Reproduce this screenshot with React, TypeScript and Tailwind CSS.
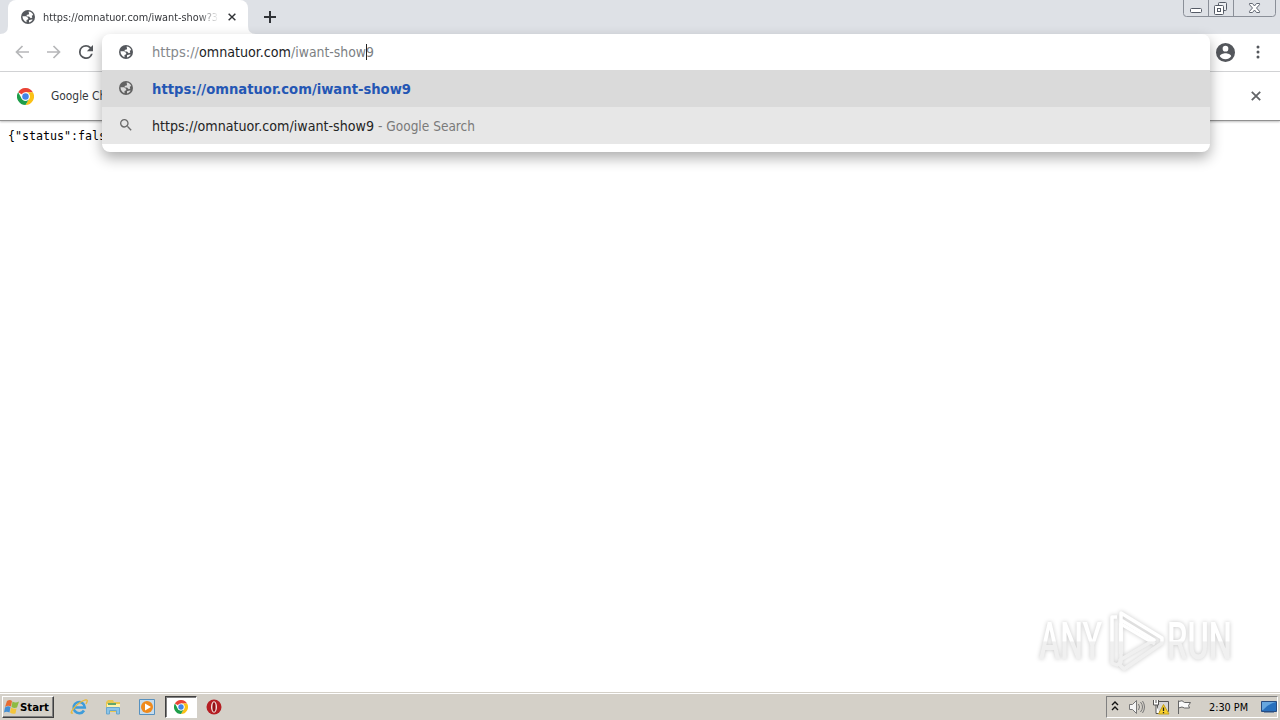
import type { ReactNode } from 'react';

const UI_FONT = "font-['DejaVu_Sans_Condensed','Noto_Sans',sans-serif]";

function GlobeIcon({ className, land }: { className: string; land: string }) {
  return (
    <svg viewBox="0 0 14 14" className={className}>
      <circle cx="7" cy="7" r="7" fill="currentColor" />
      <path d="M1.500 6.300h3.700l2 1.600v1.300L5.500 10v2.300Q1.500 10.500 1.500 6.300z" fill={land} />
      <path d="M7.600 1.500Q11 1.700 12.200 5l-1.500.8.6 1.700-1.500.8L8 6.600H6L5.500 5l2.600-.8z" fill={land} />
      <path d="M8 10.200l2.500-.7 1.300.2Q10.300 12 8 12.500z" fill={land} />
    </svg>
  );
}

function SearchIcon() {
  return (
    <svg viewBox="0 0 24 24" className="size-4 text-[#6b6b6b]" fill="currentColor">
      <path d="M15.5 14h-.79l-.28-.27A6.47 6.47 0 0 0 16 9.5 6.5 6.5 0 1 0 9.5 16c1.61 0 3.09-.59 4.23-1.57l.27.28v.79l5 4.99L20.49 19l-4.99-5zm-6 0C7.01 14 5 11.99 5 9.5S7.01 5 9.5 5 14 7.01 14 9.5 11.99 14 9.5 14z" />
    </svg>
  );
}

function ChromeLogo({ className }: { className: string }) {
  return (
    <svg viewBox="0 0 48 48" className={className}>
      <path d="M24 24 3.2 12A24 24 0 0 1 44.8 12L24 12z" fill="#ea4335" />
      <path d="M24 12H44.8A24 24 0 0 1 24 48L34.4 30A12 12 0 0 0 24 12z" fill="#fbc116" />
      <path d="M3.2 12 13.6 30A12 12 0 0 0 34.4 30L24 48A24 24 0 0 1 3.2 12z" fill="#1e9e4a" />
      <circle cx="24" cy="24" r="12" fill="#fff" />
      <circle cx="24" cy="24" r="9.2" fill="#4285e8" />
    </svg>
  );
}

function CloseIcon({ className }: { className: string }) {
  return (
    <svg viewBox="0 0 10 10" className={className} fill="none" stroke="currentColor" strokeWidth="1.8">
      <path d="M.8.8l8.4 8.4M9.2.8.8 9.2" />
    </svg>
  );
}

function WindowControls() {
  return (
    <svg viewBox="0 0 94 18" className="h-[18px] w-[94px]" fill="none" stroke="#8a8f98">
      <path d="M.5 0v13.5q0 3 3 3h86q3 0 3-3V0M25.5 0v16.5M50.5 0v16.5" />
      <rect x="7.5" y="8.5" width="11" height="4" rx="1" fill="#fff" stroke="#555b66" />
      <g stroke="#555b66">
        <rect x="35.5" y="2.5" width="8" height="8" rx="1" fill="#eceef1" />
        <rect x="31.5" y="5.500" width="9" height="9" rx="1" fill="#fff" />
        <rect x="34.5" y="8.500" width="3" height="3" />
      </g>
      <path
        d="M66.5 3.5h3l2 2.5 2-2.5h3v1.2L73.5 8l3 3.3v1.2h-3l-2-2.5-2 2.5h-3v-1.2l3-3.3-3-3.3z"
        fill="#fff"
        stroke="#626873"
      />
    </svg>
  );
}

function TabStrip() {
  return (
    <header className="flex h-[34px] shrink-0 bg-[#dee1e6]">
      <svg viewBox="0 0 8 34" className="h-[34px] w-2 shrink-0" fill="#fff">
        <path d="M8 26v8H0q8 0 8-8z" />
      </svg>
      <div className="flex w-60 items-center rounded-t-lg bg-white pl-[13px]">
        <GlobeIcon className="size-[14px] shrink-0 text-[#55585d]" land="#fff" />
        <svg className="ml-2 block h-[18px] w-[176px] mask-[linear-gradient(to_right,black_88%,transparent)] text-[11px]" fill="#35373b">
          <text x="0" y="13" textLength="175" lengthAdjust="spacingAndGlyphs">https://omnatuor.com/iwant-show?3</text>
        </svg>
        <CloseIcon className="ml-[9px] size-2 text-[#303236]" />
      </div>
      <svg viewBox="0 0 8 34" className="h-[34px] w-2 shrink-0" fill="#fff">
        <path d="M0 26v8h8q-8 0-8-8z" />
      </svg>
      <svg viewBox="0 0 12 12" className="mt-[11px] ml-2 size-3" stroke="#303338" strokeWidth="2">
        <path d="M6 0v12M0 6h12" />
      </svg>
      <div className="mr-[3px] ml-auto">
        <WindowControls />
      </div>
    </header>
  );
}

function Toolbar() {
  return (
    <div className="flex h-[38px] shrink-0 items-center border-b border-[#d5d6d8] bg-white pb-px pl-[15px]">
      <svg viewBox="0 0 14 14" className="size-[14px]" fill="none" stroke="#b6b7b9" strokeWidth="1.7">
        <path d="M14 7H1.5M7.5 1l-6 6 6 6" />
      </svg>
      <svg viewBox="0 0 14 14" className="ml-[18px] size-[14px]" fill="none" stroke="#b6b7b9" strokeWidth="1.7">
        <path d="M0 7h12.500M6.500 1l6 6-6 6" />
      </svg>
      <svg viewBox="4 4 16 16" className="ml-[18px] size-[14px]" fill="#54575b">
        <path d="M17.65 6.35A7.96 7.96 0 0 0 12 4a8 8 0 1 0 7.73 10h-2.08A6 6 0 1 1 12 6c1.66 0 3.14.69 4.22 1.78L13 11h7V4l-2.35 2.35z" />
      </svg>
      <svg viewBox="2 2 20 20" className="ml-auto size-[19px]" fill="#54575c">
        <path d="M12 2a10 10 0 1 0 0 20 10 10 0 0 0 0-20zm0 3a3 3 0 1 1 0 6 3 3 0 0 1 0-6zm0 14.2a7.2 7.2 0 0 1-6-3.220c.03-1.990 4-3.080 6-3.080s5.970 1.090 6 3.080a7.200 7.200 0 0 1-6 3.220z" />
      </svg>
      <svg viewBox="0 0 4 14" className="mr-5 ml-[21px] h-[14px] w-1" fill="#54575c">
        <circle cx="2" cy="2" r="1.500" />
        <circle cx="2" cy="7" r="1.500" />
        <circle cx="2" cy="12" r="1.500" />
      </svg>
    </div>
  );
}

function InfoBar() {
  return (
    <div className="flex h-[49px] shrink-0 items-center border-b border-[#919191] bg-white pl-[17px] shadow-[0_1px_2px_rgba(0,0,0,0.25)]">
      <ChromeLogo className="size-[17px]" />
      <svg className="ml-[17px] h-[18px] w-[86px] text-[12.5px]" fill="#35373b">
        <text x="0" y="13" textLength="83" lengthAdjust="spacingAndGlyphs">Google Chrome</text>
      </svg>
      <CloseIcon className="mr-[19px] ml-auto size-[10px] text-[#626467]" />
    </div>
  );
}

function Row({ icon, className, children }: { icon: ReactNode; className: string; children: ReactNode }) {
  return (
    <div className={`flex items-center pl-4 ${className}`}>
      <div className="flex w-4 justify-center">{icon}</div>
      <svg className="ml-[18px] h-6 w-[360px] text-[14px]">{children}</svg>
    </div>
  );
}

function Omnibox() {
  return (
    <div className="absolute top-[34px] left-[102px] w-[1108px] overflow-hidden rounded-lg bg-white pb-2 shadow-[0_6px_14px_rgba(0,0,0,0.32)]">
      <Row className="h-9" icon={<GlobeIcon className="size-[14px] text-[#55585d]" land="#fff" />}>
        <text x="0" y="17" textLength="47" lengthAdjust="spacingAndGlyphs" fill="#85888c">https://</text>
        <text x="47" y="17" textLength="92" lengthAdjust="spacingAndGlyphs" fill="#1c1d1f">omnatuor.com</text>
        <text x="139" y="17" textLength="83" lengthAdjust="spacingAndGlyphs" fill="#7c7f83">/iwant-show9</text>
        <path d="M214.500 4v16" stroke="#222" />
      </Row>
      <Row className="h-[37px] bg-[#dadada] pb-px" icon={<GlobeIcon className="size-[14px] text-[#626262]" land="#dadada" />}>
        <text x="0" y="18" textLength="259" lengthAdjust="spacingAndGlyphs" fill="#2456b4" fontWeight="700">https://omnatuor.com/iwant-show9</text>
      </Row>
      <Row className="h-[37px] bg-[#e7e7e7] pb-px" icon={<SearchIcon />}>
        <text x="0" y="18" textLength="222" lengthAdjust="spacingAndGlyphs" fill="#242424">https://omnatuor.com/iwant-show9</text>
        <text x="226" y="18" textLength="97" lengthAdjust="spacingAndGlyphs" fill="#7a7a7a">- Google Search</text>
      </Row>
    </div>
  );
}

function Watermark() {
  return (
    <svg
      viewBox="0 0 204 70"
      className="absolute top-[604px] left-[1033px] h-[70px] w-[204px] font-['Roboto',sans-serif] text-[51px] font-medium drop-shadow-[0_0_2px_rgba(0,0,0,0.22)]"
    >
      <defs>
        <linearGradient id="metal" x1="0" y1="0" x2="0" y2="70" gradientUnits="userSpaceOnUse">
          <stop offset=".53" stopColor="#fff" />
          <stop offset=".54" stopColor="#f0f0f0" />
          <stop offset=".85" stopColor="#f0f0f0" />
        </linearGradient>
      </defs>
      <text x="6" y="55" textLength="63" lengthAdjust="spacingAndGlyphs" fill="url(#metal)">ANY</text>
      <text x="134" y="55" textLength="65" lengthAdjust="spacingAndGlyphs" fill="url(#metal)">RUN</text>
      <g fill="none" stroke="url(#metal)" strokeWidth="3.500" strokeLinejoin="round">
        <path d="M84 13h-5v46l5 2 4-3V20l34 20" />
        <path d="M88 50V9l41 25v5L91 65l-4-4v-5l34-20-33-20" />
      </g>
    </svg>
  );
}

function ExplorerIcon() {
  return (
    <svg viewBox="0 0 18 18" className="size-[18px]">
      <path d="M2 4 4 2h5l1 2h6v10H2z" fill="#e8c752" />
      <path d="M3 6h13v7H3z" fill="#fff2aa" />
      <path d="M4 5h8v2H4z" fill="#62a66b" />
      <path d="M2.500 16V9.500h13V16h-3v-3.500h-7V16z" fill="#8cc4e8" stroke="#68a7cf" />
    </svg>
  );
}

function Taskbar() {
  return (
    <footer className="flex h-7 shrink-0 items-center border-t border-[#d4d0c8] bg-[#d4d0c8] pt-px shadow-[inset_0_1px_0_#fff]">
      <div className="ml-[2px] flex h-[22px] w-[52px] items-center border border-t-white border-r-[#404040] border-b-[#404040] border-l-white pl-px shadow-[inset_-1px_-1px_0_#808080]">
        <svg viewBox="0 0 16 16" className="size-4">
          <path d="M3 2q3-2 5 0L7 7.500Q4 6 1 8z" fill="#e76c32" />
          <path d="M8.500 2.500q3 2 6.500 0l-2 6q-3 1-5.500-.5z" fill="#8dbb43" />
          <path d="M1 8.500q3-2 5.500-.5l-1 5.500q-3-1.500-5.500 0z" fill="#448fd4" />
          <path d="M7 8.500q3 2 5.500 1l-1 5q-3 1-5.500-1z" fill="#f4c53b" />
        </svg>
        <svg className="h-4 w-8 font-['DejaVu_Sans_Condensed','DejaVu_Sans',sans-serif] text-[11px] font-bold">
          <text x="0" y="12" textLength="29" lengthAdjust="spacingAndGlyphs">Start</text>
        </svg>
      </div>
      <svg viewBox="0 0 18 18" className="ml-4 size-[18px]" fill="none">
        <path d="M14 12.500A5.600 5.600 0 1 1 14.800 9.500H5" stroke="#3e9cda" strokeWidth="2.600" />
        <path d="M3 15Q-1 16 4 10T15 2q4-1 1 4" stroke="#e9b93b" strokeWidth="1.300" />
      </svg>
      <div className="ml-4">
        <ExplorerIcon />
      </div>
      <svg viewBox="0 0 16 16" className="ml-[17px] size-4">
        <path d="M.5.5h15v15H.5z" fill="#c6dced" stroke="#5791bf" />
        <circle cx="8" cy="8" r="6" fill="#ef8a1d" />
        <path d="M6 4.500v7L12 8z" fill="#fff" />
      </svg>
      <div className="ml-[10px] flex h-[22px] w-8 items-center justify-center border border-t-[#404040] border-r-white border-b-white border-l-[#404040] bg-white shadow-[inset_1px_1px_0_#808080]">
        <ChromeLogo className="size-[14px]" />
      </div>
      <svg viewBox="0 0 16 16" className="ml-[9px] size-4">
        <circle cx="8" cy="8" r="7.500" fill="#b51e23" />
        <ellipse cx="8" cy="8" rx="3" ry="5.800" fill="#f5e9e5" />
        <ellipse cx="8" cy="8" rx="1.600" ry="4.800" fill="#941015" />
      </svg>
      <div className="mr-[2px] ml-auto flex h-[22px] w-[172px] items-center border border-t-[#808080] border-r-white border-b-white border-l-[#808080] pl-1">
        <svg viewBox="0 0 8 10" className="h-[10px] w-2 -translate-y-px" fill="none" stroke="#111" strokeWidth="1.400">
          <path d="m1 4 3-3 3 3M1 9l3-3 3 3" />
        </svg>
        <svg viewBox="0 0 17 16" className="ml-[9px] h-4 w-[17px]" fill="none" stroke="#777">
          <path d="M1.500 5.500h3l4-4v13l-4-4h-3z" fill="#f5f5f5" />
          <path d="M10.500 5q2 3 0 6M12.500 3q4 5 0 10M14.500 2q4 6 0 12" />
        </svg>
        <svg viewBox="0 0 18 16" className="ml-[7px] h-4 w-[18px]">
          <path d="M5.500 2.500h11v10h-11z" fill="#d6d6d6" stroke="#555" />
          <path d="M1.500 1v5h5V1M4 1v3M4 6v8.500h4" fill="#fff" stroke="#555" />
          <path d="M11.500 5.500 6.500 15h10.500z" fill="#f9d12c" stroke="#c4a11c" />
          <path d="M11.500 8.500v3.500M11.500 13v1.200" stroke="#222" strokeWidth="1.300" />
        </svg>
        <svg viewBox="0 0 16 16" className="ml-[6px] size-4" fill="#fafafa" stroke="#666">
          <path d="M2.500 15V1.500M2.500 2.500q4-2 6 1h6l-2 3 1 2.500h-5q-2-2-6 0z" />
        </svg>
        <svg className="ml-[17px] h-4 w-[43px] text-[11px]">
          <text x="0" y="12" textLength="39" lengthAdjust="spacingAndGlyphs">2:30 PM</text>
        </svg>
        <svg viewBox="0 0 16 14" className="ml-[9px] h-[14px] w-4">
          <path d="M.5 1.500h15v10H.5z" fill="#2870bd" stroke="#284c80" />
          <path d="M1 2h14Q7 4 2 10H1z" fill="#67a7df" />
          <path d="M3 12.500h10" stroke="#7e91a8" />
        </svg>
      </div>
    </footer>
  );
}

export default function App() {
  return (
    <div className={`relative flex h-[720px] w-[1280px] flex-col overflow-hidden bg-white text-black ${UI_FONT}`}>
      <TabStrip />
      <Toolbar />
      <InfoBar />
      <main className="flex-1 pt-[6px] pl-2">
        <svg className="h-[18px] w-[150px] font-['DejaVu_Sans_Mono',monospace] text-[11.5px]">
          <text x="0" y="13" textLength="112" lengthAdjust="spacingAndGlyphs">{'{"status":false}'}</text>
        </svg>
      </main>
      <Taskbar />
      <Omnibox />
      <Watermark />
    </div>
  );
}
